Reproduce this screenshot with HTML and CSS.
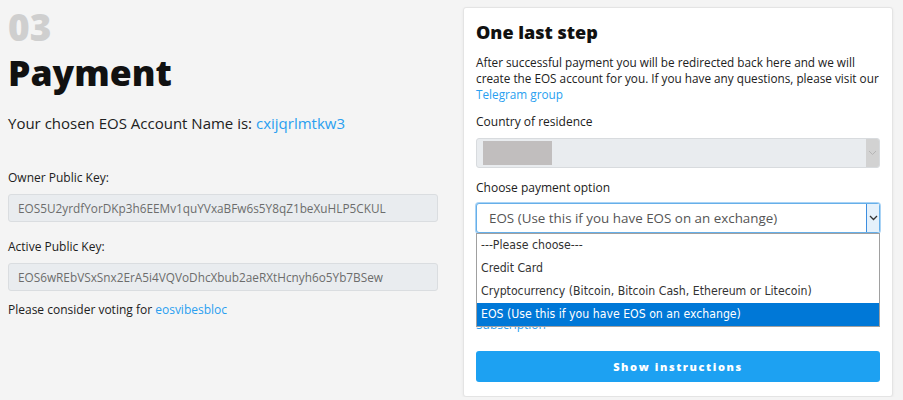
FILE: index.html
```html
<!DOCTYPE html>
<html>
<head>
<meta charset="utf-8">
<link rel="stylesheet" href="styles.css">
</head>
<body>
<div class="page">
  <div class="left">
    <div class="step">03</div>
    <h1 class="title">Payment</h1>
    <p class="chosen">Your chosen EOS Account Name is: <a class="link">cxijqrlmtkw3</a></p>
    <label class="label owner">Owner Public Key:</label>
    <div class="input">EOS5U2yrdfYorDKp3h6EEMv1quYVxaBFw6s5Y8qZ1beXuHLP5CKUL</div>
    <label class="label">Active Public Key:</label>
    <div class="input">EOS6wREbVSxSnx2ErA5i4VQVoDhcXbub2aeRXtHcnyh6o5Yb7BSew</div>
    <p class="vote">Please consider voting for <a class="link">eosvibesbloc</a></p>
  </div>
  <div class="card">
    <h2 class="card-title">One last step</h2>
    <p class="card-text">After successful payment you will be redirected back here and we will create the EOS account for you. If you have any questions, please visit our <a class="link">Telegram group</a></p>
    <label class="label">Country of residence</label>
    <div class="select disabled">
      <span class="redacted"></span>
      <span class="arrow"><svg width="9" height="6" viewBox="0 0 9 6"><path d="M1 1l3.5 3.5L8 1" fill="none" stroke="#b5b5b5" stroke-width="1"/></svg></span>
    </div>
    <label class="label">Choose payment option</label>
    <div class="select-wrap">
      <div class="select focused">
        <span class="value">EOS (Use this if you have EOS on an exchange)</span>
        <span class="arrow"><svg width="9" height="6" viewBox="0 0 9 6"><path d="M1 1l3.5 3.5L8 1" fill="none" stroke="#333" stroke-width="1.3"/></svg></span>
      </div>
      <ul class="dropdown">
        <li>---Please choose---</li>
        <li>Credit Card</li>
        <li>Cryptocurrency (Bitcoin, Bitcoin Cash, Ethereum or Litecoin)</li>
        <li class="active">EOS (Use this if you have EOS on an exchange)</li>
      </ul>
    </div>
    <p class="hidden-link"><a class="link">Subscription</a></p>
    <button class="btn">Show instructions</button>
  </div>
</div>
</body>
</html>
```
FILE: styles.css
```css
* { box-sizing: border-box; }
body {
  margin: 0;
  background: #f4f4f4;
  font-family: "Open Sans", "Noto Sans", sans-serif;
  color: #212121;
}
.page {
  display: flex;
  gap: 25px;
  padding: 7px 10px 0 8px;
}
.left {
  width: 430px;
  display: flex;
  flex-direction: column;
}
.step {
  font-size: 37px;
  font-weight: 800;
  color: #cfcfcf;
  line-height: 40px;
}
.title {
  margin: 3px 0 0;
  font-size: 35.5px;
  font-weight: 800;
  line-height: 44px;
  color: #111;
}
.chosen {
  margin: 18px 0 0;
  font-size: 15px;
  line-height: 22px;
}
.link { color: #2a9ff0; text-decoration: none; }
.label {
  display: block;
  font-size: 12px;
  line-height: 16px;
  margin-bottom: 8px;
}
.owner { margin-top: 36px; }
.input {
  height: 28px;
  background: #e9ecef;
  border: 1px solid #dadde0;
  border-radius: 3px;
  font-size: 11.8px;
  color: #6c6c6c;
  line-height: 26px;
  padding: 0 9px;
  margin-bottom: 17px;
}
.vote {
  margin: -6px 0 0;
  font-size: 12px;
  line-height: 16px;
}
.card {
  width: 430px;
  height: 390px;
  background: #fff;
  border: 1px solid #e4e4e4;
  border-radius: 3px;
  box-shadow: 0 1px 3px rgba(0,0,0,0.06);
  padding: 12px 12px 0 12px;
  display: flex;
  flex-direction: column;
}
.card-title {
  margin: 0;
  font-size: 18px;
  font-weight: 800;
  line-height: 24px;
  color: #111;
}
.card-text {
  margin: 10px 0 12px;
  font-size: 11.75px;
  line-height: 16px;
}
.select {
  height: 30px;
  border-radius: 3px;
  display: flex;
  align-items: stretch;
  margin-bottom: 12px;
  position: relative;
}
.select.disabled {
  background: #e9ecef;
  border: 1px solid #d8dbde;
}
.redacted {
  width: 69px;
  margin: 2px 0 2px 6px;
  background: #c1bebe;
}
.select .arrow {
  margin-left: auto;
  width: 13px;
  display: flex;
  align-items: center;
  justify-content: center;
}
.select.disabled .arrow { background: #d2d2d2; border-radius: 0 2px 2px 0; }
.select-wrap { position: relative; margin-top: -1px; }
.select.focused {
  background: #fff;
  border: 1px solid #66afe9;
  box-shadow: 0 0 0 1px #a9d3f5;
  margin-bottom: 0;
  align-items: center;
}
.select.focused .value {
  font-size: 13.4px;
  color: #555;
  padding-left: 12px;
}
.select.focused .arrow {
  align-self: stretch;
  background: #e5f1fb;
  border-left: 1px solid #3c8ee0;
}
.dropdown {
  position: absolute;
  left: 0;
  right: 0;
  top: 30px;
  margin: 0;
  padding: 0;
  list-style: none;
  background: #fff;
  border: 1px solid #a0a0a0;
  font-family: "DejaVu Sans Condensed", "DejaVu Sans", sans-serif;
  font-size: 12.2px;
  color: #333;
  z-index: 2;
}
.dropdown li {
  height: 23px;
  line-height: 23px;
  padding-left: 4px;
}
.dropdown li.active { background: #0078d7; color: #fff; }
.hidden-link {
  margin: 84px 0 0;
  font-size: 12px;
  line-height: 16px;
  height: 16px;
}
.btn {
  margin-top: 18px;
  height: 31px;
  width: 100%;
  border: 0;
  border-radius: 3px;
  background: #1da1f2;
  color: #fff;
  font-family: "Open Sans", sans-serif;
  font-weight: 800;
  font-size: 11px;
  letter-spacing: 1.6px;
}
```
